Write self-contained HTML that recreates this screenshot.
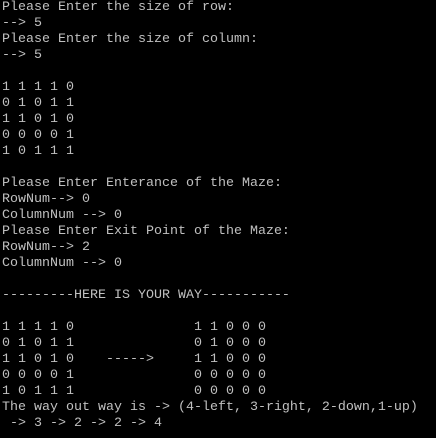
<!DOCTYPE html>
<html><head><style>
html,body{margin:0;padding:0;background:#000;width:436px;height:438px;overflow:hidden}
pre{margin:0;padding:0 0 0 2px;font-family:"Liberation Mono",monospace;font-size:13.33px;line-height:16px;color:#c0c0c0;letter-spacing:0}
</style></head><body><pre>Please Enter the size of row:
--> 5
Please Enter the size of column:
--> 5

1 1 1 1 0
0 1 0 1 1
1 1 0 1 0
0 0 0 0 1
1 0 1 1 1

Please Enter Enterance of the Maze:
RowNum--> 0
ColumnNum --> 0
Please Enter Exit Point of the Maze:
RowNum--> 2
ColumnNum --> 0

---------HERE IS YOUR WAY-----------

1 1 1 1 0               1 1 0 0 0
0 1 0 1 1               0 1 0 0 0
1 1 0 1 0    ----->     1 1 0 0 0
0 0 0 0 1               0 0 0 0 0
1 0 1 1 1               0 0 0 0 0
The way out way is -> (4-left, 3-right, 2-down,1-up)
 -> 3 -> 2 -> 2 -> 4</pre></body></html>
